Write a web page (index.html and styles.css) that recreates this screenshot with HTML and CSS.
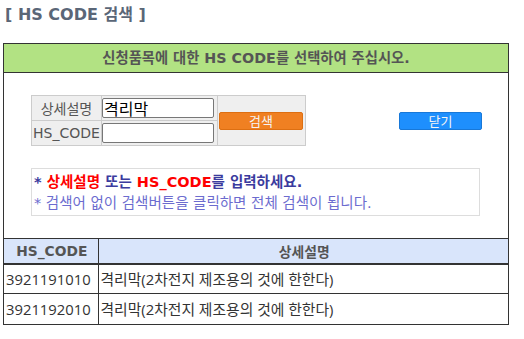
FILE: index.html
```html
<!DOCTYPE html>
<html lang="ko">
<head>
<meta charset="utf-8">
<title>HS CODE 검색</title>
<link rel="stylesheet" href="styles.css">
</head>
<body>
<div class="page">
  <h1 class="title">[ HS CODE 검색 ]</h1>
  <div class="panel">
    <div class="panel-head">신청품목에 대한 HS CODE를 선택하여 주십시오.</div>
    <div class="panel-body">
      <div class="search-row">
        <table class="search">
          <tr>
            <th class="lbl">상세설명</th>
            <td class="inp"><input class="field" type="text" value="격리막"></td>
            <td class="btn-cell" rowspan="2"><button class="btn btn-orange" type="button">검색</button></td>
          </tr>
          <tr>
            <th class="lbl">HS_CODE</th>
            <td class="inp"><input class="field" type="text" value=""></td>
          </tr>
        </table>
        <button class="btn btn-blue" type="button">닫기</button>
      </div>
      <div class="notice">
        <p class="n1">* <span class="red">상세설명</span> 또는 <span class="red">HS_CODE</span>를 입력하세요.</p>
        <p class="n2">* 검색어 없이 검색버튼을 클릭하면 전체 검색이 됩니다.</p>
      </div>
    </div>
    <table class="results">
      <thead>
        <tr><th class="c1">HS_CODE</th><th>상세설명</th></tr>
      </thead>
      <tbody>
        <tr><td class="c1">3921191010</td><td>격리막(2차전지 제조용의 것에 한한다)</td></tr>
        <tr><td class="c1">3921192010</td><td>격리막(2차전지 제조용의 것에 한한다)</td></tr>
      </tbody>
    </table>
  </div>
</div>
</body>
</html>
```

FILE: styles.css
```css
* { box-sizing: border-box; }
html, body { margin: 0; padding: 0; background: #fff; }
body {
  font-family: "DejaVu Sans", "Noto Sans CJK KR", sans-serif;
  font-size: 13px;
  color: #444;
}
.page { padding: 0 0 0 3px; width: 509px; }
.title {
  margin: 0;
  padding: 6px 0 0 2px;
  height: 43px;
  font-size: 16px;
  line-height: 18px;
  font-weight: bold;
  color: #5a6677;
}
.panel {
  border: 1px solid #333;
  width: 506px;
}
.panel-head {
  background: #b2e283;
  border-bottom: 1px solid #333;
  height: 29px;
  line-height: 28px;
  text-align: center;
  font-weight: bold;
  color: #555;
  font-size: 14.3px;
}
.panel-body { padding: 22px 0 22px 27px; }
.search-row { display: flex; align-items: center; gap: 93px; }
.search {
  border-collapse: collapse;
  background: #efefef;
  border: 1px solid #ccc;
}
.search th, .search td { border: 1px solid #ccc; padding: 0; }
.lbl {
  width: 70px;
  height: 25px;
  font-weight: normal;
  color: #555;
  font-size: 14px;
  text-align: center;
}
.inp { width: 116px; padding: 0 0 0 3px; }
.field {
  display: block;
  width: 112px;
  height: 20px;
  border: 1px solid #777;
  border-radius: 2px;
  padding: 0 1px;
  font-family: "DejaVu Sans", "Noto Sans CJK KR", sans-serif;
  font-size: 16px;
  color: #000;
  background: #fff;
}
.btn-cell { width: 88px; padding: 0 1px 0 1px; }
.btn {
  display: block;
  width: 84px;
  height: 18px;
  padding: 0;
  border-radius: 2px;
  color: #f4f4f4;
  font-family: "Noto Sans CJK KR", sans-serif;
  font-size: 13px;
  line-height: 16px;
}
.btn-orange { background: #f08022; border: 1px solid #dd6f12; margin-left: 1px; }
.btn-blue { background: #1e8ffd; border: 1px solid #1878d8; width: 83px; }
.notice {
  width: 449px;
  border: 1px solid #ddd;
  margin-top: 22px;
  padding: 3px 0 2px 2px;
}
.notice p { margin: 0; line-height: 20px; font-size: 14.5px; }
.n1 { font-weight: bold; color: #3b3b9e; }
.n2 { color: #6c6ccf; margin-top: 1px !important; }
.red { color: #ff0000; }
.results {
  width: 100%;
  border-collapse: collapse;
  font-family: "Open Sans", "Noto Sans CJK KR", sans-serif;
  font-size: 14.8px;
}
.results th, .results td { border-left: 1px solid #333; padding: 0 0 0 2px; }
.results th:first-child, .results td:first-child { border-left: none; }
.results thead th {
  background: #d9e5fb;
  border-top: 1px solid #333;
  border-bottom: 2px solid #333;
  height: 25px;
  color: #555;
  font-family: "DejaVu Sans", "Noto Sans CJK KR", sans-serif;
  font-weight: bold;
  font-size: 13.8px;
  text-align: center;
}
.results tbody td {
  height: 30px;
  color: #333;
  border-bottom: 1px solid #333;
}
.results tbody tr:last-child td { border-bottom: none; }
.results .c1 { width: 94px; }
```
